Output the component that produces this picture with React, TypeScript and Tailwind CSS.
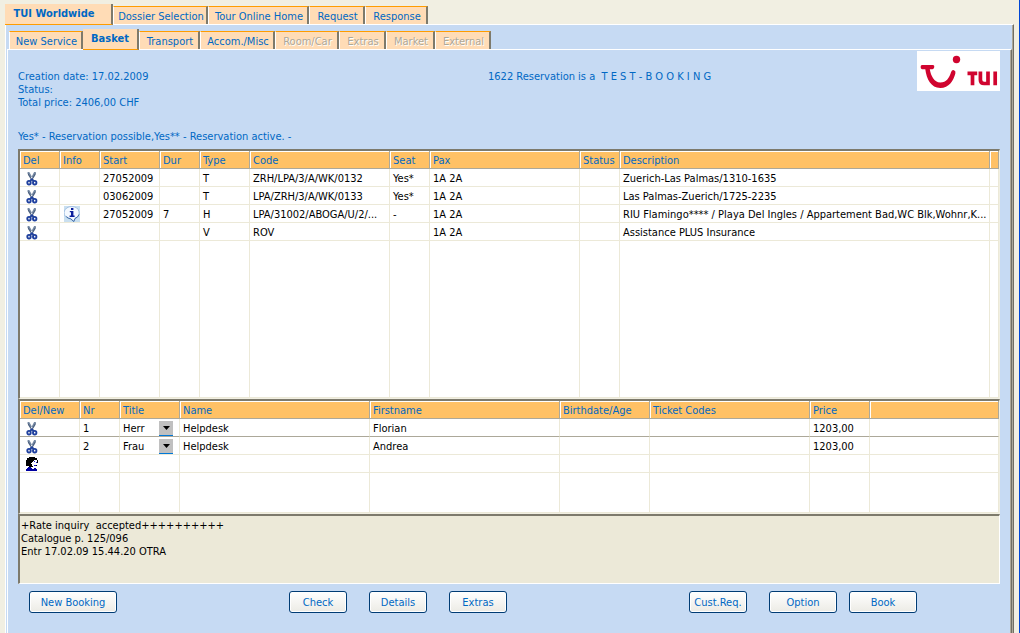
import type { ReactNode } from 'react';

// Reservation basket screen: two tab levels, service list, traveller list, log and actions

interface Tab {
  label: string;
  className: string;
  active?: boolean;
  disabled?: boolean;
}

interface Service {
  start: string;
  dur?: string;
  type: string;
  code: string;
  seat?: string;
  description: string;
  info?: boolean;
}

interface Traveller {
  nr: number;
  title: string;
  name: string;
  firstname: string;
  price: string;
}

const mainTabs: Tab[] = [
  { label: 'TUI Worldwide', className: 'w-[108px] pr-2', active: true },
  { label: 'Dossier Selection', className: 'w-[95px]' },
  { label: 'Tour Online Home', className: 'w-[101px]' },
  { label: 'Request', className: 'w-[56px]' },
  { label: 'Response', className: 'w-[63px]' },
];

const subTabs: Tab[] = [
  { label: 'New Service', className: 'w-[74px] border-r-0' },
  { label: 'Basket', className: 'w-[56px]', active: true },
  { label: 'Transport', className: 'w-[61px]' },
  { label: 'Accom./Misc', className: 'w-[75px]' },
  { label: 'Room/Car', className: 'w-[64px]', disabled: true },
  { label: 'Extras', className: 'w-[47px]', disabled: true },
  { label: 'Market', className: 'w-[49px]', disabled: true },
  { label: 'External', className: 'w-[56px]', disabled: true },
];

const services: Service[] = [
  { start: '27052009', type: 'T', code: 'ZRH/LPA/3/A/WK/0132', seat: 'Yes*', description: 'Zuerich-Las Palmas/1310-1635' },
  { start: '03062009', type: 'T', code: 'LPA/ZRH/3/A/WK/0133', seat: 'Yes*', description: 'Las Palmas-Zuerich/1725-2235' },
  {
    start: '27052009',
    dur: '7',
    type: 'H',
    code: 'LPA/31002/ABOGA/U/2/...',
    seat: '-',
    description: 'RIU Flamingo**** / Playa Del Ingles / Appartement Bad,WC Blk,Wohnr,K...',
    info: true,
  },
  { start: '', type: 'V', code: 'ROV', description: 'Assistance PLUS Insurance' },
];

const travellers: Traveller[] = [
  { nr: 1, title: 'Herr', name: 'Helpdesk', firstname: 'Florian', price: '1203,00' },
  { nr: 2, title: 'Frau', name: 'Helpdesk', firstname: 'Andrea', price: '1203,00' },
];

const serviceColumns = ['Del', 'Info', 'Start', 'Dur', 'Type', 'Code', 'Seat', 'Pax', 'Status', 'Description', ''];
const travellerColumns = ['Del/New', 'Nr', 'Title', 'Name', 'Firstname', 'Birthdate/Age', 'Ticket Codes', 'Price', ''];

function TabButton({ tab }: { tab: Tab }) {
  if (tab.active) {
    // the active tab covers the top edge of its panel
    return (
      <button
        type="button"
        className={`relative -mb-px h-[21px] shrink-0 border-r-2 border-b border-r-[#7d7a6c] border-b-[#ff9c00] bg-[#ffdcb6] pb-[2px] text-center font-bold whitespace-nowrap ${tab.className}`}
      >
        {tab.label}
      </button>
    );
  }
  return (
    <button
      type="button"
      disabled={tab.disabled}
      className={`h-[18px] shrink-0 border-t border-r-2 border-l border-t-[#ff9c00] border-r-[#7d7a6c] border-l-white bg-[#ffdcb6] pt-px pl-[2px] text-center whitespace-nowrap disabled:text-[#aca899] disabled:[text-shadow:1px_1px_0_white] ${tab.className}`}
    >
      {tab.label}
    </button>
  );
}

function ScissorsIcon() {
  return (
    <svg viewBox="0 0 12 15" className="h-[15px] w-3" aria-hidden="true">
      <path d="M1.500 1h1.800l4.500 8-1.600 1.500L2 4zM9.900 1H8.100L3.900 9l1.600 1.500L9.500 4z" fill="#7488a3" />
      <path d="M2 2.500 6.500 10M9.500 2.500 5 10" stroke="#3f5270" strokeWidth="0.800" fill="none" />
      <ellipse cx="3" cy="11.700" rx="1.700" ry="1.800" fill="none" stroke="#1f409e" strokeWidth="1.900" />
      <ellipse cx="8.700" cy="11.700" rx="1.700" ry="1.800" fill="none" stroke="#1f409e" strokeWidth="1.900" />
      <path d="M4 10l1.850-1.800L7.700 10" stroke="#1f409e" strokeWidth="1.700" fill="none" />
    </svg>
  );
}

function InfoIcon() {
  return (
    <svg viewBox="0 0 16 16" className="ml-px size-4" aria-hidden="true">
      <rect width="16" height="16" fill="#c9dff0" />
      <path d="M8 .6a7.200 6.200 0 0 1 3 11.800L9.800 15.600 6.600 13A7.200 6.200 0 0 1 8 .6z" fill="#f4f9ff" stroke="#8fb2da" strokeWidth=".8" />
      <path d="M15 8.500a7 6 0 0 1-4 4l-1.200 3-3-2.700a7 5 0 0 1-4.500-2.300" fill="none" stroke="#3f6ba8" strokeWidth="1" />
      <path d="M7 2h2.400v2H7zM5.800 5h3.600v4.500h1.200V11H5.600V9.500H7V6.300H5.800z" fill="#0b1f9c" />
    </svg>
  );
}

function PersonIcon() {
  return (
    <svg viewBox="0 0 12 14" className="h-[14px] w-3" shapeRendering="crispEdges" aria-hidden="true">
      <path d="M3 0h6v1h2v2h1v3h-1v3H9v1H3v-1H1V9H0V3h1V1h2z" fill="#000" />
      <path d="M8 3h3v5h-1v2H7V9H6V7H5V6h1V5h1V4h1z" fill="#fff" />
      <path d="M8 4h1v1H8zM10 5h1v1h-1zM8 8h2v1H8z" fill="#1a1ad0" />
      <path d="M0 14v-2h1v-1h1v-1h3v1h1v1h2v-1h2v1h1v2z" fill="#0000a0" />
      <path d="M6 10h3v1H8v1H7v-1H6z" fill="#fff" />
    </svg>
  );
}

function TuiLogo() {
  return (
    <svg viewBox="0 0 83 40" className="h-10 w-[83px] bg-white" role="img" aria-label="TUI">
      <path
        d="M5 14h11q1.500 0 1.300 2t-1.800 2.300h-2.700C14 25 17 31.500 23.300 31.500c6 0 9.200-4.800 10.800-10.500q.8-2.300 2.800-1.800t1.500 3C36.500 29.500 32 37 23.300 37 14 37 9.500 28 8.300 18.300H5Q3.600 18 3.600 16T5 14z"
        fill="#d0042f"
      />
      <circle cx="39.500" cy="8.500" r="3.700" fill="#d0042f" />
      <path
        d="M50.500 22.300h9.700M55.500 22v12.300M63.400 20.500v8.300q0 3.700 3.800 3.700h2.600M71 20.500v13.800M78.200 20.500v13.800"
        fill="none"
        stroke="#d0042f"
        strokeWidth="3.700"
      />
    </svg>
  );
}

function HeadCell({ children }: { children?: ReactNode }) {
  return (
    <th scope="col" className="h-[18px] truncate border-r border-b border-r-[#aca899] border-b-[#aca899] bg-[#ffc165] pt-px pl-[3px] text-left font-normal text-[#0068c4] shadow-[inset_1px_1px_0_white]">
      {children}
    </th>
  );
}

function Cell({ children }: { children?: ReactNode }) {
  return <td className="overflow-hidden border-r border-b border-[#ece9d8] pt-px pl-[3px] whitespace-nowrap">{children}</td>;
}

function DeleteButton() {
  return (
    <button type="button" aria-label="Delete" className="ml-[3px] block">
      <ScissorsIcon />
    </button>
  );
}

function ActionButton({ label, className }: { label: string; className: string }) {
  return (
    <button
      type="button"
      className={`h-[22px] shrink-0 rounded-[3px] border border-[#003c74] bg-linear-to-b from-white to-[#ecebe5] text-center shadow-[inset_0_0_0_1px_white] ${className}`}
    >
      {label}
    </button>
  );
}

export default function App() {
  return (
    <div className="flex min-h-screen flex-col border-r border-[#0046d5] bg-[#f1efe2] pt-1 pr-[5px] pl-[5px] font-['DejaVu_Sans_Condensed','Noto_Sans',sans-serif] text-[11px] leading-[13px] text-[#0068c4]">
      {/* Main tabs */}
      <nav aria-label="Main" className="flex h-5 items-end">
        {mainTabs.map((tab) => (
          <TabButton key={tab.label} tab={tab} />
        ))}
      </nav>

      <div className="flex grow flex-col border-t border-r border-l border-t-white border-r-[#716f64] border-l-white bg-[#c6daf3] pt-1 pr-px pl-px shadow-[inset_-1px_0_0_#aca899]">
        {/* Sub tabs */}
        <nav aria-label="Dossier" className="flex h-5 items-end pl-[2px]">
          {subTabs.map((tab) => (
            <TabButton key={tab.label} tab={tab} />
          ))}
        </nav>

        <main className="flex grow flex-col border-t border-r border-l border-t-white border-r-[#716f64] border-l-white pr-[11px] pl-[10px] shadow-[inset_-1px_0_0_#aca899]">
          {/* Booking header */}
          <header className="grid grid-cols-[470px_1fr_auto]">
            <div className="pt-5">
              <p>Creation date: 17.02.2009</p>
              <p>Status:</p>
              <p>Total price: 2406,00 CHF</p>
            </div>
            <p className="pt-5">1622 Reservation is a&nbsp; T E S T - B O O K I N G</p>
            <div className="pt-px">
              <TuiLogo />
            </div>
          </header>
          <p className="pt-[21px] pb-[6px]">Yes* - Reservation possible,Yes** - Reservation active. -</p>

          {/* Booked services */}
          <section className="h-[250px] border-t-2 border-r border-b border-l-2 border-t-[#7d7a6c] border-r-[#f1efe2] border-b-[#f1efe2] border-l-[#7d7a6c] bg-white">
            <table className="h-full w-full table-fixed border-separate border-spacing-0">
              <colgroup>
                <col className="w-10" />
                <col className="w-10" />
                <col className="w-[60px]" />
                <col className="w-10" />
                <col className="w-[50px]" />
                <col className="w-[140px]" />
                <col className="w-10" />
                <col className="w-[150px]" />
                <col className="w-10" />
                <col />
                <col className="w-[9px]" />
              </colgroup>
              <thead>
                <tr>
                  {serviceColumns.map((column) => (
                    <HeadCell key={column}>{column}</HeadCell>
                  ))}
                </tr>
              </thead>
              <tbody className="text-black">
                {services.map((service) => (
                  <tr key={service.code} className="h-[18px]">
                    <Cell>
                      <DeleteButton />
                    </Cell>
                    <Cell>{service.info && <InfoIcon />}</Cell>
                    <Cell>{service.start}</Cell>
                    <Cell>{service.dur}</Cell>
                    <Cell>{service.type}</Cell>
                    <Cell>{service.code}</Cell>
                    <Cell>{service.seat}</Cell>
                    <Cell>1A 2A</Cell>
                    <Cell />
                    <Cell>{service.description}</Cell>
                    <Cell />
                  </tr>
                ))}
                <tr>
                  {serviceColumns.map((column) => (
                    <Cell key={column} />
                  ))}
                </tr>
              </tbody>
            </table>
          </section>

          {/* Travellers */}
          <section className="h-[115px] border-t-2 border-r border-b border-l-2 border-t-[#7d7a6c] border-r-[#f1efe2] border-b-[#f1efe2] border-l-[#7d7a6c] bg-white">
            <table className="h-full w-full table-fixed border-separate border-spacing-0">
              <colgroup>
                <col className="w-[60px]" />
                <col className="w-10" />
                <col className="w-[60px]" />
                <col className="w-[190px]" />
                <col className="w-[190px]" />
                <col className="w-[90px]" />
                <col className="w-[160px]" />
                <col className="w-[60px]" />
                <col />
              </colgroup>
              <thead>
                <tr>
                  {travellerColumns.map((column) => (
                    <HeadCell key={column}>{column}</HeadCell>
                  ))}
                </tr>
              </thead>
              <tbody className="text-black">
                {travellers.map((traveller) => (
                  <tr key={traveller.nr} className="h-[18px] first:[&>td]:border-b-[#aca899]">
                    <Cell>
                      <DeleteButton />
                    </Cell>
                    <Cell>{traveller.nr}</Cell>
                    <Cell>
                      <div className="relative h-4 pr-[6px]">
                        <select
                          aria-label={`Title of traveller ${traveller.nr}`}
                          defaultValue={traveller.title}
                          className="block h-4 w-full appearance-none"
                        >
                          <option>Herr</option>
                          <option>Frau</option>
                        </select>
                        <span className="pointer-events-none absolute right-[6px] bottom-0 flex h-[15px] w-[14px] items-center justify-center border-b border-[#0078d7] bg-[#c0c0c0]">
                          <svg viewBox="0 0 7 4" className="h-1 w-[7px]" aria-hidden="true">
                            <path d="M0 0h7L3.500 4z" />
                          </svg>
                        </span>
                      </div>
                    </Cell>
                    <Cell>{traveller.name}</Cell>
                    <Cell>{traveller.firstname}</Cell>
                    <Cell />
                    <Cell />
                    <Cell>{traveller.price}</Cell>
                    <Cell />
                  </tr>
                ))}
                <tr className="h-[18px]">
                  <Cell>
                    <button type="button" aria-label="New traveller" className="ml-[3px] block">
                      <PersonIcon />
                    </button>
                  </Cell>
                  {travellerColumns.slice(1).map((column) => (
                    <Cell key={column} />
                  ))}
                </tr>
                <tr>
                  {travellerColumns.map((column) => (
                    <Cell key={column} />
                  ))}
                </tr>
              </tbody>
            </table>
          </section>

          {/* Message log */}
          <textarea
            readOnly
            aria-label="Messages"
            className="block h-[70px] w-full resize-none border-t-2 border-r border-b border-l-2 border-t-[#7d7a6c] border-r-white border-b-white border-l-[#7d7a6c] bg-[#ece9d8] pt-[3px] pl-px text-black"
            defaultValue={'+Rate inquiry  accepted++++++++++\nCatalogue p. 125/096\nEntr 17.02.09 15.44.20 OTRA'}
          />

          {/* Actions */}
          <footer className="flex pt-[7px] pb-5 pl-[11px]">
            <ActionButton label="New Booking" className="w-[88px]" />
            <div className="flex gap-[22px] pl-[172px]">
              <ActionButton label="Check" className="w-[58px]" />
              <ActionButton label="Details" className="w-[58px]" />
              <ActionButton label="Extras" className="w-[58px]" />
            </div>
            <div className="flex pl-[182px]">
              <ActionButton label="Cust.Req." className="w-[58px]" />
              <div className="flex gap-3 pl-[22px]">
                <ActionButton label="Option" className="w-[68px]" />
                <ActionButton label="Book" className="w-[68px]" />
              </div>
            </div>
          </footer>
        </main>
      </div>
    </div>
  );
}
